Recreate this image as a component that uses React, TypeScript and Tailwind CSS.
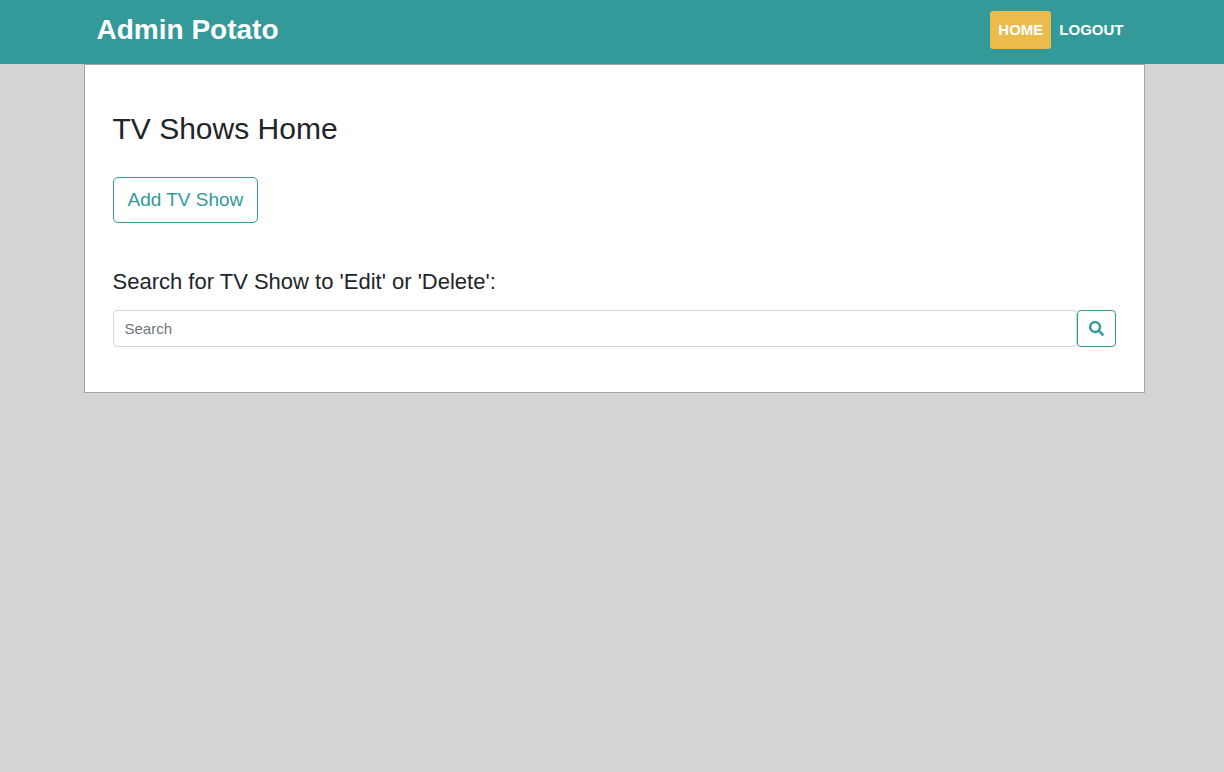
import { FaSearch } from "react-icons/fa";

export default function App() {
  return (
    <div className="min-h-screen bg-[#d4d4d4] font-['Liberation_Sans',Arial,sans-serif] text-[#212529]">
      <header className="bg-[#339999] pl-1">
        <nav className="mx-auto flex h-16 max-w-[1061px] items-start justify-between px-[13px] pt-[11px]">
          <a href="#" className="text-[28px] leading-[38px] font-bold text-white">
            Admin Potato
          </a>
          <div className="flex text-[15px] leading-6 font-bold text-white">
            <a href="#" className="rounded-[3px] bg-[#ebbb4c] px-2 py-[7px]">
              HOME
            </a>
            <a href="#" className="px-2 py-[7px]">
              LOGOUT
            </a>
          </div>
        </nav>
      </header>
      <div className="pl-1">
        <main className="mx-auto max-w-[1061px] border border-[#a6a6a6] bg-white px-7 pt-11 pb-[45px]">
          <h1 className="text-[30px] leading-10">TV Shows Home</h1>
          <button
            type="button"
            className="mt-7 h-[46px] rounded-[5px] border border-[#339999] px-[14px] text-[19px] leading-7 text-[#339999]"
          >
            Add TV Show
          </button>
          <form onSubmit={(e) => e.preventDefault()}>
            <label htmlFor="search" className="mt-11 block text-[22px] leading-[30px]">
              Search for TV Show to 'Edit' or 'Delete':
            </label>
            <div className="mt-[13px] flex">
              <input
                id="search"
                type="text"
                placeholder="Search"
                className="h-[37px] min-w-0 flex-1 rounded-[4px] border border-[#d3d7df] px-[11px] text-[15px] placeholder:text-[#6c757d]"
              />
              <button
                type="submit"
                aria-label="Search"
                className="flex h-[37px] w-[39px] items-center justify-center rounded-[4px] border border-[#339999] text-[#339999]"
              >
                <FaSearch className="size-[15px]" />
              </button>
            </div>
          </form>
        </main>
      </div>
    </div>
  );
}
